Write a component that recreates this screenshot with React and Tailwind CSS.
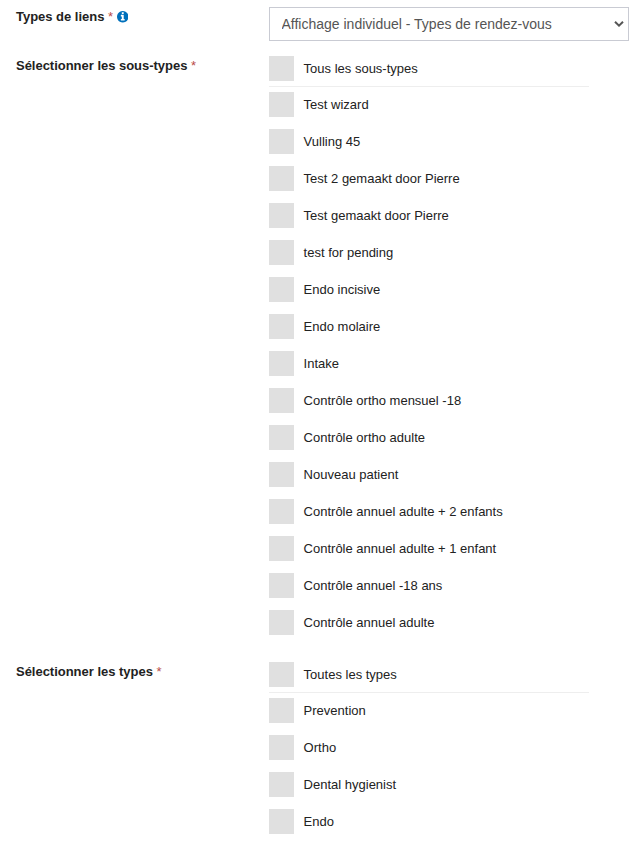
import React from 'react';

const subTypes = [
  'Test wizard',
  'Vulling 45',
  'Test 2 gemaakt door Pierre',
  'Test gemaakt door Pierre',
  'test for pending',
  'Endo incisive',
  'Endo molaire',
  'Intake',
  'Contrôle ortho mensuel -18',
  'Contrôle ortho adulte',
  'Nouveau patient',
  'Contrôle annuel adulte + 2 enfants',
  'Contrôle annuel adulte + 1 enfant',
  'Contrôle annuel -18 ans',
  'Contrôle annuel adulte',
];

const types = ['Prevention', 'Ortho', 'Dental hygienist', 'Endo'];

function InfoIcon() {
  return (
    <svg viewBox="128 128 1536 1536" className="ml-[3.5px] size-[11.5px] fill-[#0070bb]">
      <path d="M1152 1376v-160q0-14-9-23t-23-9h-96v-512q0-14-9-23t-23-9h-320q-14 0-23 9t-9 23v160q0 14 9 23t23 9h96v320h-96q-14 0-23 9t-9 23v160q0 14 9 23t23 9h448q14 0 23-9t9-23zm-128-896v-160q0-14-9-23t-23-9h-192q-14 0-23 9t-9 23v160q0 14 9 23t23 9h192q14 0 23-9t9-23zm640 416q0 209-103 385.5t-279.5 279.5-385.5 103-385.5-103-279.5-279.5-103-385.5 103-385.5 279.5-279.5 385.5-103 385.5 103 279.5 279.5 103 385.5z" />
    </svg>
  );
}

function Label({ children, info }) {
  return (
    <div className="flex w-[253px] shrink-0 items-center self-start pt-px text-[13px] leading-[18px] font-bold text-[#222]">
      <span className="tracking-[-0.02px]">{children}</span>
      <span className="ml-[3.6px] font-normal text-[#b94a48]">*</span>
      {info && <InfoIcon />}
    </div>
  );
}

function CheckItem({ label }) {
  return (
    <label className="flex h-[25px] items-center gap-[9.6px] text-[13px] text-[#222]">
      <input type="checkbox" className="size-[25px] appearance-none bg-[#e0e0e0]" />
      <span>{label}</span>
    </label>
  );
}

function CheckGroup({ all, items }) {
  return (
    <div className="w-80">
      <div className="border-b border-[#eee] pb-[5px]">
        <CheckItem label={all} />
      </div>
      <div className="mt-[5px] flex flex-col gap-3">
        {items.map((item) => (
          <CheckItem key={item} label={item} />
        ))}
      </div>
    </div>
  );
}

export default function App() {
  return (
    <div className="h-[845px] overflow-hidden bg-white pt-[7px] pl-4 font-['Liberation_Sans',Arial,sans-serif]">
      <div className="flex">
        <Label info>Types de liens</Label>
        <div className="relative">
          <select className="block h-[34px] w-[360px] appearance-none border border-[#c9cbd3] bg-white px-[11.5px] text-sm text-[#555]">
            <option>Affichage individuel - Types de rendez-vous</option>
          </select>
          <svg viewBox="0 0 10 6" className="pointer-events-none absolute top-3.5 right-[5px] h-1.5 w-2.5 fill-none stroke-[#555] stroke-2">
            <path d="M1 0.8L5 4.6L9 0.8" />
          </svg>
        </div>
      </div>
      <div className="mt-[15px] flex">
        <Label>Sélectionner les sous-types</Label>
        <CheckGroup all="Tous les sous-types" items={subTypes} />
      </div>
      <div className="mt-[27px] flex">
        <Label>Sélectionner les types</Label>
        <CheckGroup all="Toutes les types" items={types} />
      </div>
    </div>
  );
}
